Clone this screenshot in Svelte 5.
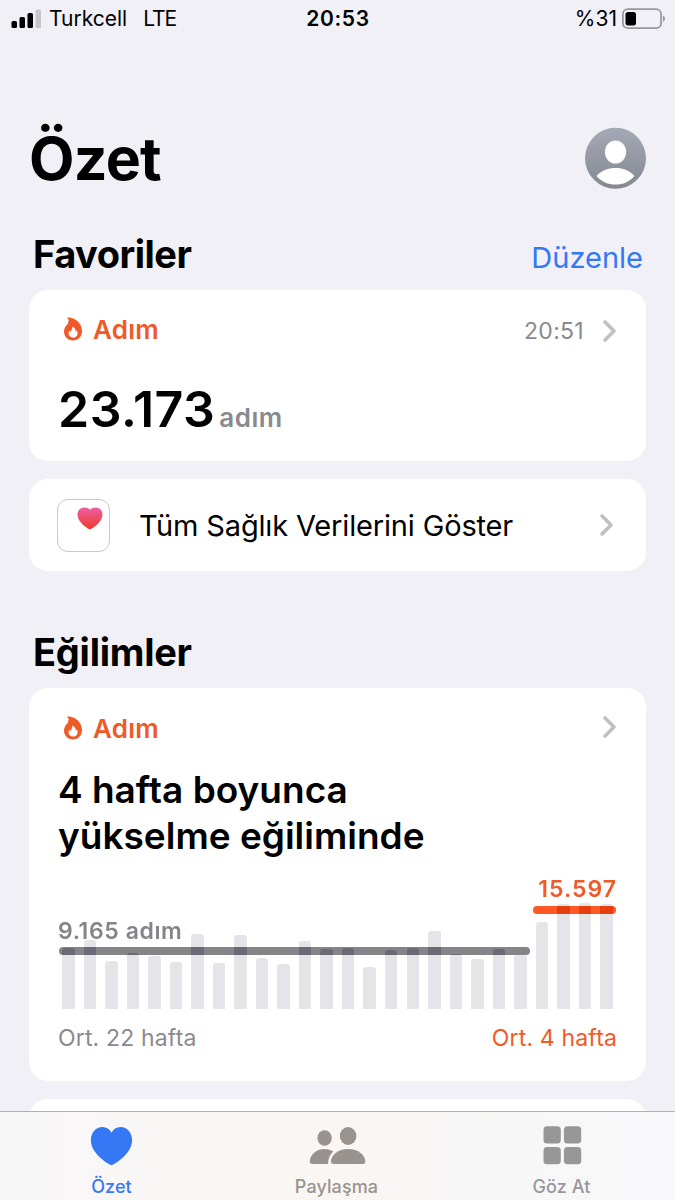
<script lang="ts">
  const bars = [
    61, 69, 48, 56, 53, 47, 75, 46, 74, 51, 45, 68, 60, 61, 42, 59, 61, 78, 55,
    50, 60, 54, 87, 105, 106, 105,
  ];

  const tabs = [
    { id: 'summary', label: 'Özet' },
    { id: 'sharing', label: 'Paylaşma' },
    { id: 'browse', label: 'Göz At' },
  ];

  let active = $state('summary');
</script>

{#snippet chevron()}
  <svg class="chevron" width="16" height="24" viewBox="0 0 16 24">
    <path d="M4 3 L13 12 L4 21" />
  </svg>
{/snippet}

{#snippet flame()}
  <svg class="flame" width="18" height="24" viewBox="0 0 18 24">
    <path
      d="M2.6 0.6 C9.5 -0.6 18 5.3 18 14 C18 19.7 14.3 23.4 9 23.4 C3.7 23.4 0 19.8 0 14.6 C0 11.3 1.4 9 3.6 6.9 C4.8 5.7 4.5 5.4 3.3 4.8 C4.8 4.6 5.1 4 4.6 3 C4.2 2 3.6 1.2 2.6 0.6 Z"
    />
    <path
      class="core"
      d="M8.4 9.4 C11 10.8 12 12.6 11.6 14.8 C12.3 14.4 12.6 13.9 12.8 13.3 C13.9 15.2 13.9 17.2 12.9 18.7 C12 20 10.6 20.6 9 20.6 C6.4 20.6 4.6 18.9 4.6 16.6 C4.6 15.2 5.1 14.3 5.8 13.5 C6 14.3 6.3 14.8 6.8 15.1 C6.9 12.9 8.8 11.8 8.4 9.4 Z"
    />
  </svg>
{/snippet}

<div class="screen">
  <header class="status">
    <div class="carrier">
      <svg width="31" height="20" viewBox="0 0 31 20">
        <rect x="0.5" y="12" width="5.5" height="7" rx="1.5" />
        <rect x="8.5" y="8" width="5.5" height="11" rx="1.5" />
        <rect x="16.5" y="4" width="5.5" height="15" rx="1.5" />
        <rect class="off" x="24.5" y="0.5" width="5.5" height="18.5" rx="1.5" />
      </svg>
      <span class="name">Turkcell</span>
      <span class="net">LTE</span>
    </div>
    <div class="clock">20:53</div>
    <div class="battery">
      <span>%31</span>
      <svg width="44" height="22" viewBox="0 0 44 22">
        <rect class="shell" x="0.9" y="1.2" width="38.2" height="19" rx="5" />
        <rect x="3.5" y="4" width="10.5" height="13.5" rx="2.5" />
        <path class="nub" d="M41 7.5 C43.6 8.6 43.6 12.8 41 13.9 Z" />
      </svg>
    </div>
  </header>

  <main>
    <div class="title">
      <h1>Özet</h1>
      <svg width="62" height="62" viewBox="0 0 62 62">
        <defs>
          <linearGradient id="avatar" x1="0" y1="0" x2="0" y2="1">
            <stop offset="0" stop-color="#a5a9b5" />
            <stop offset="1" stop-color="#858892" />
          </linearGradient>
        </defs>
        <circle cx="31.5" cy="31.3" r="30.5" fill="url(#avatar)" />
        <ellipse cx="31.5" cy="25" rx="10.6" ry="11.6" fill="#fff" />
        <path
          d="M12.5 49 C17.5 43.5 24 41 31.5 41 C39 41 45.5 43.5 50.5 49 C45.5 54.8 39 57.6 31.5 57.6 C24 57.6 17.5 54.8 12.5 49 Z"
          fill="#fff"
        />
      </svg>
    </div>

    <div class="section">
      <h2 class="fav">Favoriler</h2>
      <button class="edit">Düzenle</button>
    </div>

    <section class="card steps">
      <div class="card-head">
        {@render flame()}
        <span class="metric">Adım</span>
        <span class="time">20:51</span>
        {@render chevron()}
      </div>
      <div class="reading">
        <span class="value">23.173</span>
        <span class="unit">adım</span>
      </div>
    </section>

    <section class="card all-data">
      <div class="health">
        <svg width="26" height="23" viewBox="0 0 26 23">
          <defs>
            <linearGradient id="heart" x1="0" y1="0" x2="0" y2="1">
              <stop offset="0" stop-color="#ec5fa4" />
              <stop offset="1" stop-color="#f0392b" />
            </linearGradient>
          </defs>
          <path
            d="M13 22.5 C11.8 22.5 0.5 15.8 0.5 7.6 C0.5 3.3 3.3 0.5 7 0.5 C9.6 0.5 11.8 1.3 13 2.8 C14.2 1.3 16.4 0.5 19 0.5 C22.7 0.5 25.5 3.3 25.5 7.6 C25.5 15.8 14.2 22.5 13 22.5 Z"
            fill="url(#heart)"
          />
        </svg>
      </div>
      <span class="link">Tüm Sağlık Verilerini Göster</span>
      {@render chevron()}
    </section>

    <div class="section trends">
      <h2>Eğilimler</h2>
    </div>

    <section class="card trend">
      <div class="card-head">
        {@render flame()}
        <span class="metric">Adım</span>
        <span class="time"></span>
        {@render chevron()}
      </div>
      <h3>4 hafta boyunca<br />yükselme eğiliminde</h3>
      <div class="chart">
        <div class="rule grey"></div>
        <div class="rule orange"></div>
        {#each bars as height}
          <div class="bar" style="height: {height}px"></div>
        {/each}
        <span class="avg before">9.165 adım</span>
        <span class="avg after">15.597</span>
      </div>
      <div class="legend">
        <span>Ort. 22 hafta</span>
        <span class="recent">Ort. 4 hafta</span>
      </div>
    </section>

    <section class="card next"></section>
  </main>

  <nav>
    {#each tabs as tab}
      <button
        class="tab {tab.id}"
        class:active={active === tab.id}
        onclick={() => (active = tab.id)}
      >
        <svg width="60" height="40" viewBox="0 0 60 40">
          {#if tab.id === 'summary'}
            <path
              d="M29.5 39.2 C27.9 39.2 8.9 28.5 8.9 14.3 C8.9 6.5 13.8 1 20.4 1 C24.5 1 27.700 3.2 29.5 6.8 C31.3 3.2 34.5 1 38.6 1 C45.2 1 50.1 6.5 50.1 14.3 C50.1 28.5 31.1 39.2 29.5 39.2 Z"
            />
          {:else if tab.id === 'sharing'}
            <ellipse cx="17.6" cy="12" rx="7.2" ry="7.8" />
            <path
              d="M17.6 23 C21.300 23 24 23.900 26.300 25.500 C23.100 28.500 21.100 32 21.200 38 L5.300 38 C3.600 38 2.800 37.200 2.800 35.500 C2.800 29.500 8.800 23 17.600 23 Z"
            />
            <ellipse cx="41.1" cy="10" rx="8.3" ry="9" />
            <path
              d="M41.1 23 C51.300 23 58.300 29.500 58.300 35.300 C58.300 37.200 57.500 38 55.800 38 L26.500 38 C24.800 38 24 37.200 24 35.300 C24 29.500 30.900 23 41.100 23 Z"
            />
          {:else}
            <rect x="11.5" y="0.3" width="17.3" height="17.2" rx="3.5" />
            <rect x="31.9" y="0.3" width="17.3" height="17.2" rx="3.5" />
            <rect x="11.5" y="21" width="17.3" height="17.2" rx="3.5" />
            <rect x="31.9" y="21" width="17.3" height="17.2" rx="3.5" />
          {/if}
        </svg>
        <span>{tab.label}</span>
      </button>
    {/each}
  </nav>
</div>

<style>
  :global(body) {
    margin: 0;
    background: #f1f0f6;
  }

  .screen {
    display: flex;
    flex-direction: column;
    width: 675px;
    height: 1200px;
    overflow: hidden;
    background: #f1f0f6;
    color: #000;
    font-family: Inter, 'Liberation Sans', sans-serif;
    white-space: nowrap;
  }

  svg {
    display: block;
    flex: none;
  }

  h1,
  h2,
  h3 {
    margin: 0;
  }

  button {
    border: 0;
    padding: 0;
    background: none;
    font-family: inherit;
    cursor: pointer;
  }

  .status {
    display: grid;
    grid-template-columns: 1fr auto 1fr;
    height: 37px;
    padding: 0 9px 0 10px;
    font-size: 21px;
    line-height: 37px;
  }

  .carrier,
  .battery {
    display: flex;
    align-items: center;
  }

  .carrier {
    padding-left: 1px;
  }

  .battery {
    justify-content: flex-end;
    gap: 5px;
  }

  .off {
    fill: #c5c5ca;
  }

  .name {
    margin-left: 7px;
  }

  .net {
    margin-left: 16px;
    letter-spacing: -1px;
  }

  .clock {
    font-weight: 600;
    letter-spacing: 0.7px;
  }

  .shell {
    fill: none;
    stroke: #98989c;
    stroke-width: 1.8;
  }

  .nub {
    fill: #98989c;
  }

  main {
    flex: 1;
    min-height: 0;
    overflow: hidden;
    padding: 0 29px;
  }

  .title {
    display: flex;
    align-items: center;
    justify-content: space-between;
    height: 62px;
    margin-top: 90px;
  }

  h1 {
    padding-top: 2px;
    font-size: 59px;
    line-height: 62px;
    font-weight: 700;
    letter-spacing: -0.7px;
  }

  .section {
    display: flex;
    align-items: center;
    justify-content: space-between;
    height: 46px;
    margin-top: 42px;
    padding: 0 3px 13px 4px;
  }

  h2 {
    font-size: 38px;
    line-height: 46px;
    font-weight: 700;
    letter-spacing: -0.25px;
  }

  .fav {
    letter-spacing: -0.5px;
  }

  .edit {
    padding-top: 7px;
    color: #3478f6;
    font-size: 29px;
    line-height: 40px;
  }

  .card {
    box-sizing: border-box;
    border-radius: 19px;
    background: #fff;
  }

  .steps {
    height: 171px;
    padding: 19px 29px 0;
  }

  .card-head {
    display: flex;
    align-items: center;
    height: 40px;
    padding-left: 6px;
  }

  .flame {
    fill: #f05a28;
  }

  .core {
    fill: #fff;
  }

  .metric {
    margin-left: 11px;
    color: #f05a28;
    font-size: 26px;
    font-weight: 600;
    letter-spacing: 0.2px;
  }

  .time {
    margin-left: auto;
    margin-right: 17px;
    padding-top: 3px;
    color: #8a8a8e;
    font-size: 23px;
    letter-spacing: 0.3px;
  }

  .chevron {
    fill: none;
    stroke: #c0c0c3;
    stroke-width: 3.6;
    stroke-linecap: round;
    stroke-linejoin: round;
  }

  .steps .chevron {
    margin-top: 4px;
  }

  .reading {
    display: flex;
    align-items: baseline;
    margin-top: 30px;
    line-height: 60px;
  }

  .value {
    font-size: 50px;
    font-weight: 600;
    letter-spacing: 0.5px;
  }

  .unit {
    margin-left: 4px;
    color: #8a8a8e;
    font-size: 26px;
    font-weight: 600;
    letter-spacing: 0.5px;
  }

  .all-data {
    display: flex;
    align-items: center;
    height: 92px;
    margin-top: 18px;
    padding: 0 32px 0 28px;
  }

  .health {
    box-sizing: border-box;
    width: 53px;
    height: 53px;
    padding: 7px 0 0 19px;
    border: 1px solid #c9c9cc;
    border-radius: 11px;
  }

  .link {
    flex: 1;
    margin-left: 29px;
    font-size: 29px;
    letter-spacing: -0.16px;
  }

  .trends {
    margin-top: 58px;
  }

  .trend {
    height: 393px;
    padding: 20px 29px 0;
  }

  .trend .chevron {
    margin-top: -2px;
  }

  h3 {
    margin-top: 19px;
    font-size: 37px;
    line-height: 46px;
    font-weight: 600;
  }

  .chart {
    position: relative;
    display: flex;
    align-items: flex-end;
    justify-content: space-between;
    height: 140px;
    margin-top: 10px;
    padding: 0 4px;
    background: #fff;
    isolation: isolate;
  }

  /* subtracts from what is below, so the average lines darken behind the bars */
  .bar {
    width: 12.5px;
    border-radius: 3px 3px 0 0;
    background: #1a1b16;
    mix-blend-mode: difference;
  }

  .avg {
    position: absolute;
    z-index: 1;
    font-size: 23px;
    line-height: 28px;
    font-weight: 600;
    letter-spacing: 0.6px;
  }

  .before {
    left: 0;
    top: 48px;
    color: #858589;
  }

  .after {
    right: 0;
    top: 6px;
    color: #f05a28;
    letter-spacing: 1px;
  }

  .rule {
    position: absolute;
    height: 7.5px;
    border-radius: 4px;
  }

  .grey {
    left: 1px;
    top: 78.3px;
    width: 471px;
    background: #858489;
  }

  .orange {
    right: 1px;
    top: 37.3px;
    width: 83px;
    background: #ff5a25;
  }

  .legend {
    display: flex;
    justify-content: space-between;
    margin-top: 14px;
    color: #8a8a8e;
    font-size: 23px;
    line-height: 30px;
    letter-spacing: 0.15px;
  }

  .recent {
    color: #f05a28;
  }

  .next {
    height: 60px;
    margin-top: 18px;
  }

  nav {
    display: grid;
    grid-template-columns: repeat(3, 1fr);
    flex: none;
    box-sizing: border-box;
    height: 89px;
    border-top: 1px solid #b0b0b2;
    background: linear-gradient(90deg, #f8f7f8 5%, #f9f6f4 25%, #f9f6f4 50%, #f7f7f7 75%, #f8f8fa);
  }

  .tab {
    display: flex;
    flex-direction: column;
    align-items: center;
    margin-left: -2px;
    padding-top: 14px;
    color: #979797;
    font-size: 18px;
    line-height: 22px;
    font-weight: 500;
    letter-spacing: 0.1px;
  }

  .tab svg {
    fill: currentColor;
  }

  .tab span {
    margin-top: 10px;
  }

  .tab.sharing {
    color: #999390;
  }

  .tab.active {
    color: #3478f6;
  }
</style>
